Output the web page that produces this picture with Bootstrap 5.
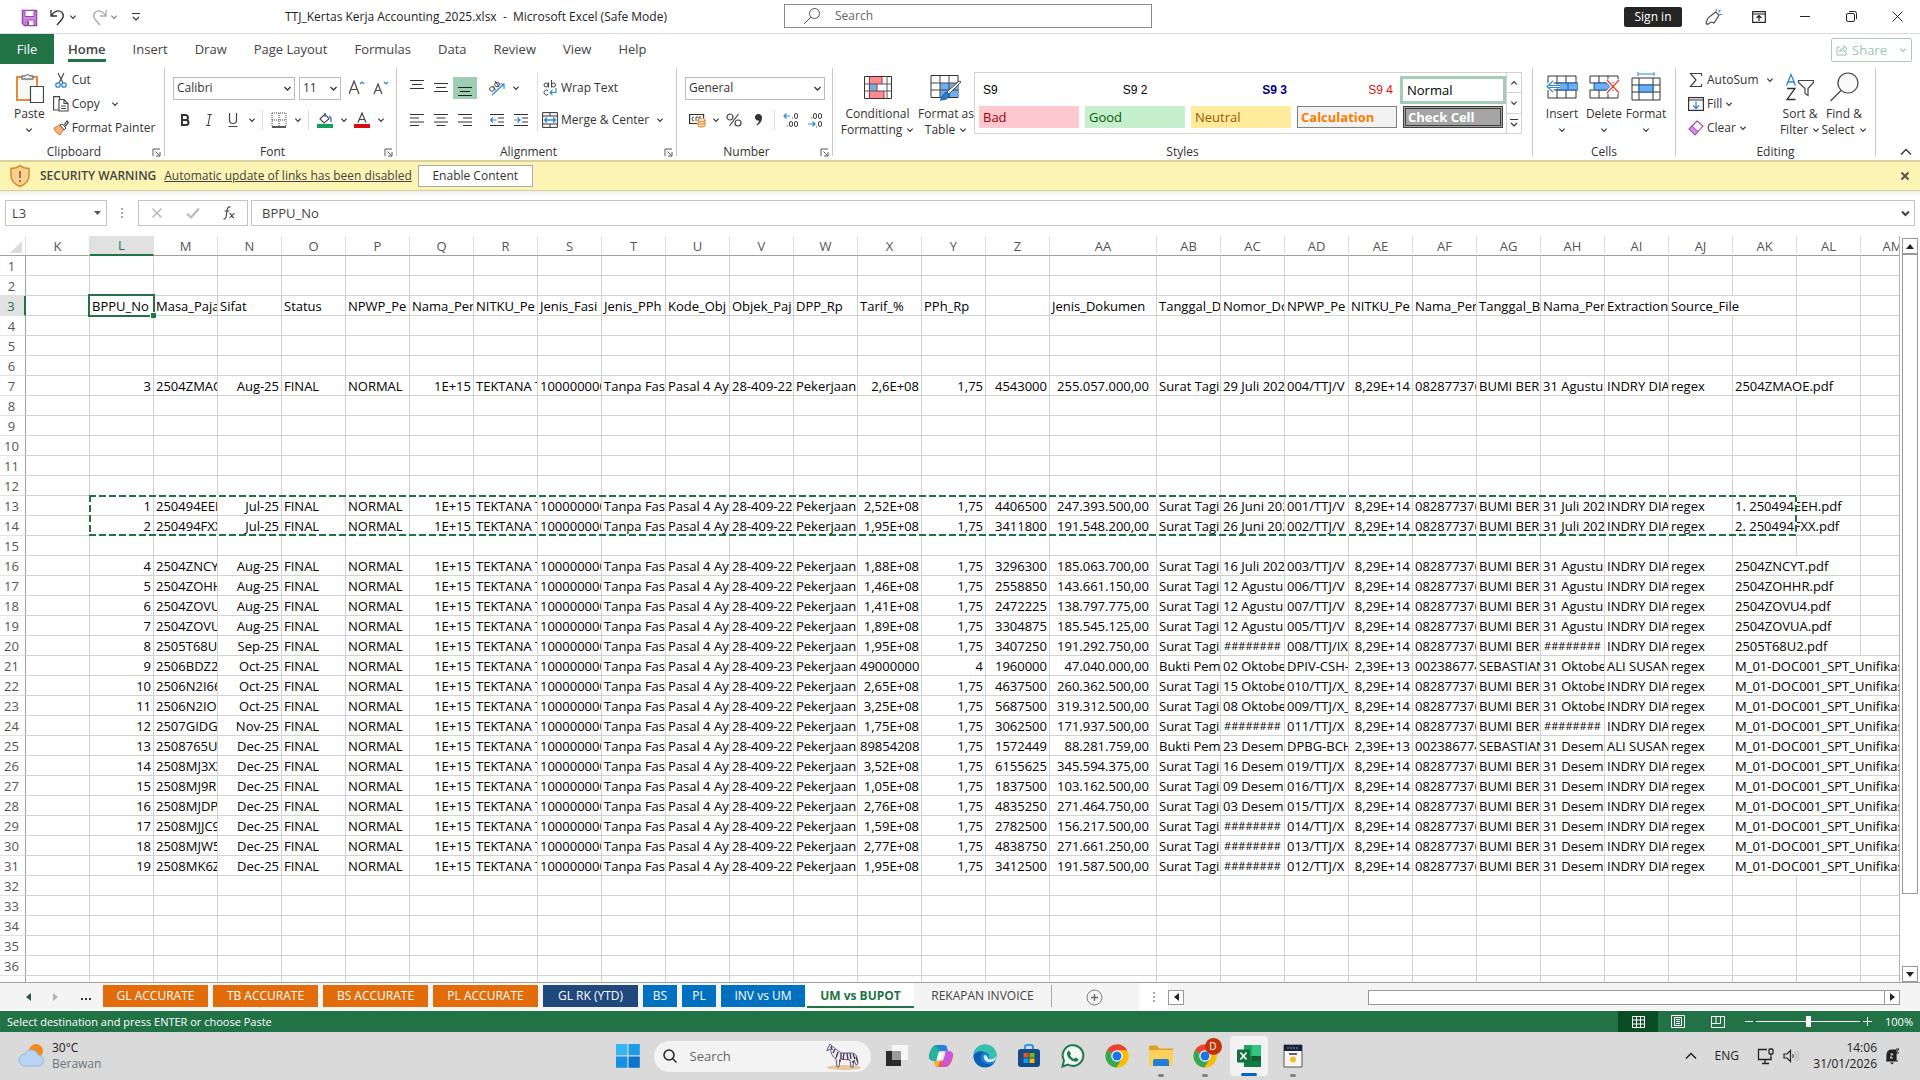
<!DOCTYPE html>
<html lang="en">
<head>
<meta charset="utf-8">
<meta name="viewport" content="width=device-width, initial-scale=1">
<title>TTJ_Kertas Kerja Accounting_2025.xlsx - Microsoft Excel</title>
<link href="https://cdn.jsdelivr.net/npm/bootstrap@5.3.0/dist/css/bootstrap.min.css" rel="stylesheet">
<style>
:root{--xl:#217346;--ink:#333;--line:#c6c6c6}
html,body{height:100%}
body{font-family:"Open Sans","Noto Sans",sans-serif;font-size:12px;line-height:16px;color:var(--ink);background:#fff;overflow:hidden}
button,input,select{font:inherit;color:inherit}
.plain{border:0;background:none;padding:0;color:inherit;display:flex;align-items:center;justify-content:center}
svg{display:block;flex:none}
.app{height:100vh;min-width:0}
.titlebar{height:34px;border-bottom:1px solid #dcdcdc}
.side{flex:1 1 0;min-width:0}
.docname{left:285px;font-size:12px;color:#222;white-space:nowrap}
.findbox{width:368px;height:24px;border:1px solid #8a8a8a;color:#666}
.findbox input,.taskfind input{border:0;outline:0;background:transparent;min-width:0}
.findbox input::placeholder,.taskfind input::placeholder{color:#666;opacity:1}
.signin{height:20px;width:58px;background:#252525;color:#fff;border-radius:2px}
.wbtn{width:46px;height:33px}
.tabs{height:30px}
.tabs a{color:#444;text-decoration:none;font-size:13px;line-height:30px;white-space:nowrap;padding:0 13px 0 14px}
.tabs a.filetab{background:var(--xl);color:#fff;width:54px;text-align:center;padding:0}
.tabs a.current span{font-weight:600;display:block;height:28px;border-bottom:3px solid var(--xl)}
.share{width:81px;height:24px;border:1px solid #a9cdb9;border-radius:2px;color:#9bc7af;font-size:13px}
.ribbon{height:96px;padding-top:4px}
.grp{height:88px;border-right:1px solid #c8c8c8;display:flex;flex-direction:column;flex:none}
.grp-main{height:72px;display:flex}
.grp-name{height:16px;line-height:24px;text-align:center;position:relative;white-space:nowrap}
.grp-name svg{position:absolute;right:3px;top:8px}
.w-clip{width:165px}.w-font{width:232px}.w-align{width:280px}.w-num{width:156px}.w-sty{width:700px}.w-cell{width:143px}.w-edit{width:200px}
.w-clip .grp-main{padding-left:14px}
.big{flex-direction:column;justify-content:flex-start;white-space:nowrap}
.big .pic{height:38px;display:flex;align-items:center;justify-content:center}
.small-b{height:24px;justify-content:flex-start;gap:3px;white-space:nowrap}
.toolrow{height:24px;display:flex;align-items:center}
.ib{width:24px;height:22px}
.ch{width:13px;height:22px}
.vs{width:1px;height:20px;background:#dcdcdc;flex:none}
.on{background:#9fcdb3}
.combo{height:23px;border:1px solid #bbb;display:flex;align-items:center;position:relative;background:#fff}
.combo select{appearance:none;border:0;background:transparent;width:100%;height:21px;padding:0 3px;outline:0}
.combo .fontsel{width:120px}.combo .sizesel{width:40px}.combo .numsel{width:138px}
.combo svg{position:absolute;right:2px;top:6px;pointer-events:none}
.cfb{width:89px}.ftb{width:48px}.cfb,.ftb{flex:none}
.cb{width:42px;flex:none}.editcol{width:94px;flex:none}.eb{width:44px;flex:none}
.gallery{width:548px;height:62px;border:1px solid #d2d2d2}
.chips{display:grid;grid-template-columns:repeat(5,100px);column-gap:6px;row-gap:5px;padding:6px 0 0 4px;grid-template-rows:22px 22px}
.chip{border:0;height:22px;padding:0 4px;text-align:left;font-size:13px;line-height:20px;background:none;color:#000}
.chip.s9{font-family:"Liberation Sans",sans-serif;font-size:12px}
.chip.navy{color:#000080}.chip.redt{color:#d11}
.chip.bad{background:#ffc7ce;color:#9c0006}.chip.good{background:#c6efce;color:#006100}.chip.neu{background:#ffeb9c;color:#9c5700}
.chip.calc{background:#f2f2f2;color:#fa7d00;border:1px solid #7f7f7f;font-weight:700;padding:0 3px}
.chip.chk{background:#a5a5a5;color:#fff;border:3px double #3f3f3f;font-weight:700;padding:0 2px;line-height:14px}
.chip.sel{outline:3px solid #a4cdb8}
.gscroll{width:15px;border-left:1px solid #d2d2d2}
.gscroll button{flex:1;width:100%}
.gscroll button+button{border-top:1px solid #d2d2d2}
.warn{height:31px;background:#fcf4b3;border-top:2px solid #d9d2a0;border-bottom:1px solid #d6d0a0;color:#444}
.warn a{color:#444}
.warn .enable{width:115px;height:22px;border:1px solid #ababab;background:#fff;color:#333;margin-left:6px}
.warnt{margin-left:8px}.warnl{margin-left:8px}.warnx{margin-right:10px}
.fx{height:45px;padding:9px 5px 0 5px;background:linear-gradient(#eee,#fff 6px);color:#444}
.fbox{height:26px;border:1px solid #c3c3c3;display:flex;align-items:center;background:#fff}
.fbox input{border:0;outline:0;background:transparent;min-width:0;width:100%;font-size:13px;padding:0}
.namebox{width:102px;padding-left:6px}.dots{margin:0 14px}.fxb{width:110px}.fxi{width:36px;height:24px}.formula{margin-left:3px;padding-left:10px}
.sheetarea{flex:1 1 0;min-height:0}
.gridwrap{flex:1 1 0;min-width:0;overflow:hidden;position:relative;border-right:1px solid #b5b5b5}
table.sheet{table-layout:fixed;border-collapse:separate;border-spacing:0;width:0;font-size:13px;line-height:18px;color:#000}
.sheet th,.sheet td{height:20px;padding:1px 2px 0 2px;overflow:hidden;white-space:nowrap;border-right:1px solid #d2d2d2;border-bottom:1px solid #d2d2d2}
.sheet th{font-weight:400;color:#555;text-align:center;padding:1px 0 0}
.sheet thead th{border-bottom-color:#a0a0a0;border-right-color:#dedede;padding:0}
.sheet tbody th{border-right-color:#a0a0a0;padding-right:2px;border-bottom-color:#e2e2e2}
.sheet th.hot{background:#e1e1e1;color:var(--xl)}
.sheet thead th.hot{border-bottom:2px solid var(--xl)}
.sheet tbody th.hot{border-right:2px solid var(--xl)}
.sheet td.r{text-align:right}
.sheet td.acc{text-align:right;padding-right:7px}
.sheet td.c{text-align:center;font-size:11px}
.cursorbox{position:absolute;left:88px;top:58px;width:67px;height:23px;border:2px solid var(--xl)}
.cursorbox i{position:absolute;right:-3px;bottom:-3px;width:6px;height:6px;background:var(--xl);border:solid #fff;border-width:1px 0 0 1px}
.ants{position:absolute;left:89px;top:259px;width:1708px;height:41px;background:
repeating-linear-gradient(90deg,var(--xl) 0 7px,#fff 7px 10px) 0 0/100% 2px no-repeat,
repeating-linear-gradient(90deg,var(--xl) 0 7px,#fff 7px 10px) 0 100%/100% 2px no-repeat,
repeating-linear-gradient(var(--xl) 0 7px,#fff 7px 10px) 0 0/2px 100% no-repeat,
repeating-linear-gradient(var(--xl) 0 7px,#fff 7px 10px) 100% 0/2px 100% no-repeat}
.vbar{width:20px;padding:2px 2px 0 2px}
.sbtn{width:16px;height:16px;border:1px solid #999;background:#fff}
.thumb{border:1px solid #999;background:#fff}
.vthumb{width:16px;flex:1;max-height:640px}
.sheettabs{height:29px;border-top:1px solid #a0a0a0;background:#f4f4f4}
.tabnav{width:103px;padding-left:26px;gap:22px}
.tabset{gap:5px;margin-right:2px}
.sheettabs .st{border:0;height:22px;color:#fff;font-size:12px;white-space:nowrap;padding:0;margin-top:2px}
.st.o{background:#e26b0a;width:105px}.st.n{background:#1f497d;width:95px}.st.b{background:#0070c0}
.st.w1{width:34px}.st.w2{width:84px}
.sheettabs .st.act{background:#fff;color:var(--xl);font-weight:700;width:107px;height:25px;padding-top:2px;border-bottom:2px solid var(--xl);margin:0}
.sheettabs .st.idle{background:none;color:#444;width:138px;border-right:1px solid #ababab}
.addsheet{width:84px}
.hbar{width:781px;align-items:center;padding-right:20px}
.split{width:29px;background:#fff;height:28px}
.hbar .sbtn{height:15px}
.hthumb{width:516px;height:15px;border-right:0}
.stat{height:21px;background:var(--xl);color:#fff;font-size:11px}
.stmsg{padding-left:7px}.zm{width:14px;height:14px}
.pct{width:46px;padding-right:7px;white-space:nowrap}
.view{width:40px;height:21px}
.view.on2{background:#0a4d22}
.zoomr{width:104px;appearance:none;background:transparent;height:14px;margin:0}
.zoomr::-webkit-slider-runnable-track{height:1px;background:#fff}
.zoomr::-webkit-slider-thumb{appearance:none;width:5px;height:11px;background:#fff;margin-top:-5px}
.taskbar{height:48px;background:#dadada;color:#222}
.apps{margin-right:18px}
.tb{width:44px;height:48px;position:relative}
.tb.run::after{content:"";position:absolute;bottom:3px;width:6px;height:3px;border-radius:2px;background:#808080}
.tb.act{width:38px;height:40px;margin:0 3px;background:#f2f2f2;border-radius:4px}
.tb.act::after{content:"";position:absolute;bottom:0;width:16px;height:3px;border-radius:2px;background:#0067c0}
.taskfind{width:217px;height:31px;border-radius:16px;background:#f3f3f3;font-size:13px}
.notif{position:absolute;left:22px;top:6px;width:17px;height:17px;border-radius:50%;background:#c4320a;color:#fff;font-size:10px;line-height:17px;text-align:center}
.weather{padding-left:18px}
.eng{margin:0 18px}.spk{margin:0 14px 0 8px}.clock{width:64px;margin-right:8px}.bell{margin-right:20px}
</style>
<script src="https://cdn.jsdelivr.net/npm/bootstrap@5.3.0/dist/js/bootstrap.bundle.min.js"></script>
</head>
<body>
<svg width="0" height="0" class="position-absolute" aria-hidden="true">
<defs>
<symbol id="chev" viewBox="0 0 9 9"><path d="M1.500 3l3 3 3-3" fill="none" stroke="currentColor" stroke-width="1.300"/></symbol>
<symbol id="chevup" viewBox="0 0 9 9"><path d="M1.500 6l3-3 3 3" fill="none" stroke="currentColor" stroke-width="1.300"/></symbol>
<symbol id="launch" viewBox="0 0 9 9"><path d="M1 8V1h7M3.500 3.500l4 4M8 4v4H4" fill="none" stroke="#555"/></symbol>
<symbol id="chrome" viewBox="0 0 24 24"><circle cx="12" cy="12" r="11.500" fill="#fbbc04"/><path d="M12 12L2 6.300A11.500 11.500 0 0 1 22 6.300z" fill="#ea4335"/><path d="M12 .5a11.500 11.500 0 0 1 10 5.800H12z" fill="#ea4335"/><path d="M2 6.300A11.500 11.500 0 0 0 11.500 23.500L17 15 12 12z" fill="#34a853"/><path d="M12 6.300h10a11.500 11.500 0 0 1-10.500 17.200L17 15z" fill="#fbbc04"/><circle cx="12" cy="12" r="5.800" fill="#fff"/><circle cx="12" cy="12" r="4.500" fill="#1a73e8"/></symbol>
</defs>
</svg>
<div class="app d-flex flex-column">

<header class="titlebar d-flex align-items-start position-relative flex-shrink-0">
  <div class="side d-flex align-items-center">
    <button class="plain ms-3 ps-1" aria-label="Save"><svg width="18" height="33" viewBox="0 0 18 33"><path d="M2.500 10.500h14v15h-12l-2-2z" fill="#cf8fdc" stroke="#9a45b0" stroke-width="1.500"/><path d="M5 10.500h9v6H5zM6 20h8v5.500H6z" fill="#fff" stroke="#9a45b0"/><path d="M8 21v4" stroke="#9a45b0" stroke-width="2"/></svg></button>
    <button class="plain ms-2 ps-1" aria-label="Undo"><svg width="16" height="33" viewBox="0 0 16 33"><path d="M1 10v6h6M1.500 15.500C4 11 9 9.500 12 12.500c3 3.500 1 6-5 12.500" fill="none" stroke="#333" stroke-width="1.300"/></svg></button>
    <button class="plain ch" aria-label="Undo list"><svg width="8" height="8"><use href="#chev"/></svg></button>
    <button class="plain ms-2 ps-1" aria-label="Redo"><svg width="16" height="33" viewBox="0 0 16 33"><path d="M15 10v6H9M14.500 15.500C12 11 7 9.500 4 12.500c-3 3.500-1 6 5 12.500" fill="none" stroke="#aaa" stroke-width="1.300"/></svg></button>
    <button class="plain ch text-black-50" aria-label="Redo list"><svg width="8" height="8"><use href="#chev"/></svg></button>
    <button class="plain ms-2 ps-1" aria-label="Customize toolbar"><svg width="8" height="10" viewBox="0 0 8 10"><path d="M0 1.500h8M1 5l3 3 3-3" fill="none" stroke="#333" stroke-width="1.200"/></svg></button>
    <div class="docname position-absolute">TTJ_Kertas Kerja Accounting_2025.xlsx&nbsp; -&nbsp; Microsoft Excel (Safe Mode)</div>
  </div>
  <label class="findbox d-flex align-items-center mt-1 ms-3"><svg class="ms-3" width="22" height="20" viewBox="0 0 22 20"><circle cx="13.500" cy="7.500" r="5" fill="none" stroke="#555"/><path d="M10 11l-7 7" stroke="#555"/></svg><input class="flex-fill ms-2 ps-1" type="text" placeholder="Search" aria-label="Search"></label>
  <div class="side d-flex align-items-center justify-content-end">
    <button class="plain signin me-2">Sign in</button>
    <button class="plain wbtn" aria-label="Whats new"><svg width="18" height="18" viewBox="0 0 18 18"><path d="M2 15l1.500 1.500L7 14l3 1 5-8-3.500-3L4 10zM8.500 5.500" fill="none" stroke="#444" stroke-width="1.100"/><path d="M12 3l1-2M14.500 4l2-2M15.500 6.500H18" stroke="#2b88d8" stroke-width="1.200"/></svg></button>
    <button class="plain wbtn" aria-label="Ribbon display options"><svg width="14" height="12" viewBox="0 0 14 12"><path d="M.7.700h12.600v10.600H.7zM.7 3h12.600M7 10V4.500M4.500 7L7 4.500 9.500 7" fill="none" stroke="#222" stroke-width="1.200"/></svg></button>
    <button class="plain wbtn" aria-label="Minimize"><svg width="10" height="10"><path d="M0 4.500h10" stroke="#222"/></svg></button>
    <button class="plain wbtn" aria-label="Restore"><svg width="11" height="11" viewBox="0 0 11 11"><rect x=".5" y="2.500" width="8" height="8" rx="1.500" fill="none" stroke="#222"/><path d="M3 .5h5.500a2 2 0 0 1 2 2V8" fill="none" stroke="#222"/></svg></button>
    <button class="plain wbtn" aria-label="Close"><svg width="11" height="11" viewBox="0 0 11 11"><path d="M.5.500l10 10M10.500.500l-10 10" stroke="#222"/></svg></button>
  </div>
</header>

<nav class="tabs d-flex flex-shrink-0">
  <a href="#" class="filetab">File</a><a href="#" class="current"><span>Home</span></a><a href="#">Insert</a><a href="#">Draw</a><a href="#">Page Layout</a><a href="#">Formulas</a><a href="#">Data</a><a href="#">Review</a><a href="#">View</a><a href="#">Help</a>
  <button class="plain share ms-auto me-2 mt-1"><svg width="12" height="12" viewBox="0 0 12 12"><path d="M4 3H1v8h9V8M3.500 8C4 5 6 4 8 4V1.500L11 5 8 8V6C6 6 5 6.500 3.500 8z" fill="none" stroke="#9bc7af"/></svg><span class="mx-1">Share</span><svg class="ms-2" width="8" height="8"><use href="#chev"/></svg></button>
</nav>

<section class="ribbon d-flex flex-shrink-0">
  <div class="grp w-clip">
    <div class="grp-main">
      <button class="plain big"><span class="pic"><svg width="30" height="32" viewBox="0 0 30 32"><path d="M3 6h20v23H3z" fill="#fff" stroke="#ed8733" stroke-width="2"/><path d="M6 8h14v19H6z" fill="#f7f7f7"/><path d="M8 8V5h3a3 3 0 0 1 5 0h3v3z" fill="#fff" stroke="#777" stroke-width="1.300"/><path d="M16.500 15.500h13v16h-13z" fill="#fff" stroke="#444" stroke-width="1.200"/></svg></span><span>Paste</span><svg class="mt-1" width="8" height="8"><use href="#chev"/></svg></button>
      <div class="ms-2">
        <button class="plain small-b"><svg width="16" height="16" viewBox="0 0 16 16"><path d="M5 1l5 10M11 1L6 11" stroke="#444" stroke-width="1.100"/><circle cx="5" cy="13" r="2.200" fill="none" stroke="#2b88d8" stroke-width="1.300"/><circle cx="11" cy="13" r="2.200" fill="none" stroke="#2b88d8" stroke-width="1.300"/></svg>Cut</button>
        <button class="plain small-b"><svg width="16" height="16" viewBox="0 0 16 16"><path d="M5.500 14H.6V.6h6V3M6 3.500h5l4 4V15H6z M11 3.500v4h4M8 10h5M8 12.500h5" fill="none" stroke="#444" stroke-width="1.100"/></svg>Copy<svg class="ms-2" width="8" height="8"><use href="#chev"/></svg></button>
        <button class="plain small-b"><svg width="16" height="16" viewBox="0 0 16 16"><path d="M1 8l6-3 4 4-4 6C5 14 2 12 1 8z" fill="#f5b278" stroke="#e07b24"/><path d="M7 5l2-1 4 4-2 2z" fill="#fff" stroke="#444"/><path d="M11 5l3-4 1.500 1.500L12 6.500" fill="none" stroke="#444" stroke-width="1.200"/></svg>Format Painter</button>
      </div>
    </div>
    <div class="grp-name pe-3">Clipboard<svg width="9" height="9"><use href="#launch"/></svg></div>
  </div>

  <div class="grp w-font">
    <div class="grp-main flex-column ps-2">
      <div class="toolrow mt-2">
        <label class="combo"><select aria-label="Font" class="fontsel"><option>Calibri</option></select><svg width="9" height="9"><use href="#chev"/></svg></label>
        <label class="combo ms-1"><select aria-label="Font size" class="sizesel"><option>11</option></select><svg width="9" height="9"><use href="#chev"/></svg></label>
        <button class="plain ib ms-1" aria-label="Increase font size"><svg width="16" height="16" viewBox="0 0 16 16"><path d="M0 14L5 1l5 13M1.700 9.500h6.600" fill="none" stroke="#444" stroke-width="1.200"/><path d="M11 4l2-2 2 2" fill="none" stroke="#2b88d8" stroke-width="1.200"/></svg></button>
        <button class="plain ib" aria-label="Decrease font size"><svg width="16" height="16" viewBox="0 0 16 16"><path d="M1 14L5 4l4 10M2.500 10.500h5" fill="none" stroke="#444" stroke-width="1.200"/><path d="M11 2l2 2 2-2" fill="none" stroke="#2b88d8" stroke-width="1.200"/></svg></button>
      </div>
      <div class="toolrow mt-2">
        <button class="plain ib" aria-label="Bold"><svg width="12" height="14" viewBox="0 0 12 14"><path d="M3 2h3.500a2.300 2.300 0 0 1 0 5H3zM3 7h4a2.500 2.500 0 0 1 0 5H3z" fill="none" stroke="#333" stroke-width="2"/></svg></button>
        <button class="plain ib" aria-label="Italic"><svg width="12" height="14" viewBox="0 0 12 14"><path d="M4.500 1.500H9M3 12.500h4.500M7 1.500l-2 11" fill="none" stroke="#444" stroke-width="1.100"/></svg></button>
        <button class="plain ib" aria-label="Underline"><svg width="12" height="16" viewBox="0 0 12 16"><path d="M2.500 1v7a3.500 3.500 0 0 0 7 0V1M1.500 14.500h9" fill="none" stroke="#444" stroke-width="1.200"/></svg></button>
        <button class="plain ch" aria-label="Underline styles"><svg width="8" height="8"><use href="#chev"/></svg></button>
        <span class="vs ms-1 me-1"></span>
        <button class="plain ib" aria-label="Borders"><svg width="16" height="16" viewBox="0 0 16 16"><path d="M1 1h14M1 8h14M1 1v13M8 1v13M15 1v13" fill="none" stroke="#444" stroke-dasharray="1 1"/><path d="M1 15h14" stroke="#222" stroke-width="1.500"/></svg></button>
        <button class="plain ch" aria-label="Border styles"><svg width="8" height="8"><use href="#chev"/></svg></button>
        <span class="vs ms-1 me-1"></span>
        <button class="plain ib" aria-label="Fill colour"><svg width="16" height="16" viewBox="0 0 16 16"><path d="M3 7l5-5 4 5-5 4z" fill="#fff" stroke="#444" stroke-width="1.100"/><path d="M8 5V1M12 4l2 2v4" fill="none" stroke="#2b6fb8" stroke-width="1.300"/><path d="M0 12h16v4H0z" fill="#12a05c"/></svg></button>
        <button class="plain ch" aria-label="Fill colours"><svg width="8" height="8"><use href="#chev"/></svg></button>
        <button class="plain ib" aria-label="Font colour"><svg width="16" height="16" viewBox="0 0 16 16"><path d="M4 10.500L8 1l4 9.500M5.500 7.500h5" fill="none" stroke="#444" stroke-width="1.200"/><path d="M0 12h16v4H0z" fill="#d90d0d"/></svg></button>
        <button class="plain ch" aria-label="Font colours"><svg width="8" height="8"><use href="#chev"/></svg></button>
      </div>
    </div>
    <div class="grp-name pe-3">Font<svg width="9" height="9"><use href="#launch"/></svg></div>
  </div>

  <div class="grp w-align">
    <div class="grp-main ps-2">
      <div>
      <div class="toolrow mt-2">
        <button class="plain ib" aria-label="Top align"><svg width="16" height="22" viewBox="0 0 16 22"><path d="M1 3.500h14M3 7.500h10M1 11.500h14" stroke="#333"/></svg></button>
        <button class="plain ib" aria-label="Middle align"><svg width="16" height="22" viewBox="0 0 16 22"><path d="M1 6.500h14M3 10.500h10M1 14.500h14" stroke="#333"/></svg></button>
        <button class="plain ib on" aria-label="Bottom align"><svg width="16" height="22" viewBox="0 0 16 22"><path d="M1 10.500h14M3 14.500h10M1 18.500h14" stroke="#222"/></svg></button>
        <button class="plain ib ms-2" aria-label="Orientation"><svg width="18" height="16" viewBox="0 0 18 16"><path d="M4 15L16 4M11 4h5v5" fill="none" stroke="#2b88d8" stroke-width="1.200"/><circle cx="4" cy="9" r="2.300" fill="none" stroke="#444"/><path d="M5 6l2.500 4M7 1l4 6" stroke="#444"/><circle cx="9" cy="4.500" r="2.300" fill="none" stroke="#444"/></svg></button>
        <button class="plain ch" aria-label="Orientation list"><svg width="8" height="8"><use href="#chev"/></svg></button>
      </div>
      <div class="toolrow mt-2">
        <button class="plain ib" aria-label="Align left"><svg width="16" height="14" viewBox="0 0 16 14"><path d="M1 1.500h14M1 5h9M1 9h14M1 12.500h9" stroke="#333"/></svg></button>
        <button class="plain ib" aria-label="Center"><svg width="16" height="14" viewBox="0 0 16 14"><path d="M1 1.500h14M3.500 5h9M1 9h14M3.500 12.500h9" stroke="#333"/></svg></button>
        <button class="plain ib" aria-label="Align right"><svg width="16" height="14" viewBox="0 0 16 14"><path d="M1 1.500h14M6 5h9M1 9h14M6 12.500h9" stroke="#333"/></svg></button>
        <button class="plain ib ms-2" aria-label="Decrease indent"><svg width="16" height="14" viewBox="0 0 16 14"><path d="M1 1.500h14M9 5h6M9 9h6M1 12.500h14" stroke="#333"/><path d="M7.500 7H1M4 4.500L1.500 7 4 9.500" fill="none" stroke="#2b88d8" stroke-width="1.200"/></svg></button>
        <button class="plain ib" aria-label="Increase indent"><svg width="16" height="14" viewBox="0 0 16 14"><path d="M1 1.500h14M9 5h6M9 9h6M1 12.500h14" stroke="#333"/><path d="M1 7h6.500M4.500 4.500L7 7 4.500 9.500" fill="none" stroke="#2b88d8" stroke-width="1.200"/></svg></button>
      </div>
      </div>
      <span class="vs h-auto mt-1 mb-2 ms-1 me-1"></span>
      <div>
        <div class="toolrow mt-2"><button class="plain small-b"><svg width="16" height="18" viewBox="0 0 16 18"><circle cx="4" cy="6" r="2" fill="none" stroke="#444"/><path d="M6.500 3.500v5M9.500 1v7.500" stroke="#444"/><circle cx="11.500" cy="6" r="2" fill="none" stroke="#444"/><path d="M6 11.500a2.500 2.500 0 1 0 0 4" fill="none" stroke="#444"/><path d="M14 9v4.500H8M10.500 11L8 13.500l2.500 2.500" fill="none" stroke="#2b88d8" stroke-width="1.200"/></svg>Wrap Text</button></div>
        <div class="toolrow mt-2"><button class="plain small-b"><svg width="16" height="16" viewBox="0 0 16 16"><path d="M.6.600h14.800v14.800H.6zM.6 4h14.800M.6 12h14.800M8 .6V4M8 12v3.500" fill="#fff" stroke="#333"/><path d="M2.500 8h11M5 5.500L2.500 8 5 10.500M11 5.500L13.500 8 11 10.500" fill="none" stroke="#2b88d8" stroke-width="1.300"/></svg>Merge &amp; Center<svg class="ms-1" width="8" height="8"><use href="#chev"/></svg></button></div>
      </div>
    </div>
    <div class="grp-name pe-3">Alignment<svg width="9" height="9"><use href="#launch"/></svg></div>
  </div>

  <div class="grp w-num">
    <div class="grp-main flex-column ps-2">
      <div class="toolrow mt-2"><label class="combo"><select aria-label="Number format" class="numsel"><option>General</option></select><svg width="9" height="9"><use href="#chev"/></svg></label></div>
      <div class="toolrow mt-2">
        <button class="plain ib" aria-label="Accounting format"><svg width="18" height="16" viewBox="0 0 18 16"><path d="M9 11.500H1.600v-9h14V6" fill="none" stroke="#333" stroke-width="1.200"/><path d="M6 5a2 2 0 1 0 0 4M8 9V5h2M13 5h-2v3" fill="none" stroke="#444"/><path d="M10 8v5.500c0 2 7 2 7 0V8" fill="#fcd9b0" stroke="#e07b24"/><ellipse cx="13.500" cy="8" rx="3.500" ry="1.400" fill="#fff" stroke="#e07b24"/><path d="M10 11c0 1.500 7 1.500 7 0" fill="none" stroke="#e07b24"/></svg></button>
        <button class="plain ch" aria-label="Currencies"><svg width="8" height="8"><use href="#chev"/></svg></button>
        <button class="plain ib" aria-label="Percent"><svg width="16" height="14" viewBox="0 0 16 14"><circle cx="4" cy="4" r="3" fill="none" stroke="#444" stroke-width="1.200"/><circle cx="12" cy="10" r="3" fill="none" stroke="#444" stroke-width="1.200"/><path d="M12.500 1l-9 12" stroke="#444" stroke-width="1.200"/></svg></button>
        <button class="plain ib" aria-label="Comma style"><svg width="9" height="14" viewBox="0 0 9 14"><path d="M4.500 1a3.500 3.500 0 0 1 3.500 4c0 3-2 6-5 7.500l-.5-1C4 10.500 5 9 5 7.500a3.300 3.300 0 1 1-.5-6.500z" fill="#333"/></svg></button>
        <span class="vs ms-1 me-1"></span>
        <button class="plain ib" aria-label="Increase decimal"><svg width="16" height="16" viewBox="0 0 16 16"><path d="M7 4H1M3.500 1.500L1 4l2.500 2.500" fill="none" stroke="#2b88d8" stroke-width="1.200"/><g fill="none" stroke="#444"><rect x="11.500" y="1.500" width="3" height="5" rx="1.500"/><rect x="6.500" y="9.500" width="3" height="5" rx="1.500"/><rect x="11.500" y="9.500" width="3" height="5" rx="1.500"/></g><path d="M4 14h1M9 6h1" stroke="#444"/></svg></button>
        <button class="plain ib" aria-label="Decrease decimal"><svg width="16" height="16" viewBox="0 0 16 16"><path d="M1 12h7M5.500 9.500L8 12l-2.500 2.500" fill="none" stroke="#2b88d8" stroke-width="1.200"/><g fill="none" stroke="#444"><rect x="6.500" y="1.500" width="3" height="5" rx="1.500"/><rect x="11.500" y="1.500" width="3" height="5" rx="1.500"/><rect x="11.500" y="9.500" width="3" height="5" rx="1.500"/></g><path d="M4 6h1M9 15h1" stroke="#444"/></svg></button>
      </div>
    </div>
    <div class="grp-name pe-3">Number<svg width="9" height="9"><use href="#launch"/></svg></div>
  </div>

  <div class="grp w-sty">
    <div class="grp-main">
      <button class="plain big cfb"><span class="pic"><svg width="28" height="23" viewBox="0 0 28 23"><path d="M.5.500h27v22H.5z" fill="#fff" stroke="#333"/><path d="M6 1h12v7H6zM6 15h14v7H6z" fill="#ff8a8f"/><path d="M6 8h7v7H6z" fill="#6cb0f2"/><path d="M.5 8h27M.5 15h27M23 .5v22" stroke="#555"/><path d="M5.500.500v22M18 .5V8M13 8v7M20 15v7" stroke="#c0282d"/></svg></span><span>Conditional</span><span class="d-flex align-items-center gap-1">Formatting<svg width="8" height="8"><use href="#chev"/></svg></span></button>
      <button class="plain big ftb"><span class="pic"><svg width="32" height="28" viewBox="0 0 32 28"><path d="M1 2.500h27v22H1z" fill="#fff" stroke="#333"/><path d="M10 10h18v14H10z" fill="#6cb0f2"/><path d="M1 10h27M1 17h27M10 2.500v22M19 2.500v22" stroke="#444"/><path d="M31 9L19 21l-2-2L29 8z" fill="#fff" stroke="#444"/><path d="M19 21c1 5-5 6-9 6 3-2 2-7 7-8z" fill="#2b7cd3" stroke="#1c5a9c"/></svg></span><span>Format as</span><span class="d-flex align-items-center gap-1">Table<svg width="8" height="8"><use href="#chev"/></svg></span></button>
      <div class="gallery d-flex mt-1 ms-1">
        <div class="chips flex-fill">
          <button class="chip s9">S9</button><button class="chip s9 text-center">S9 2</button><button class="chip s9 text-end fw-bold navy">S9 3</button><button class="chip s9 text-end redt">S9 4</button><button class="chip sel">Normal</button>
          <button class="chip bad">Bad</button><button class="chip good">Good</button><button class="chip neu">Neutral</button><button class="chip calc">Calculation</button><button class="chip chk">Check Cell</button>
        </div>
        <div class="gscroll d-flex flex-column">
          <button class="plain" aria-label="Row up"><svg width="8" height="8"><use href="#chevup"/></svg></button>
          <button class="plain" aria-label="Row down"><svg width="8" height="8"><use href="#chev"/></svg></button>
          <button class="plain" aria-label="More styles"><svg width="8" height="10" viewBox="0 0 8 10"><path d="M0 1.500h8M1 5l3 3 3-3" fill="none" stroke="#333" stroke-width="1.200"/></svg></button>
        </div>
      </div>
    </div>
    <div class="grp-name">Styles</div>
  </div>

  <div class="grp w-cell">
    <div class="grp-main ps-2">
      <button class="plain big cb"><span class="pic"><svg width="32" height="24" viewBox="0 0 32 24"><path d="M2 1h28v22H2zM2 8h28M2 15h28M11 1v22M20 1v22" fill="#fff" stroke="#333"/><path d="M12 8h20v7H12z" fill="#6cb0f2" stroke="#1f5fa8"/><path d="M22 8v7" stroke="#1f5fa8"/><path d="M14 11.500H1M7 6l-6 5.500L7 17" fill="none" stroke="#fff" stroke-width="4"/><path d="M14 10.500H3M14 12.500H3M7 6l-6 5.500L7 17" fill="none" stroke="#2b88d8" stroke-width="1.200"/></svg></span><span>Insert</span><svg class="mt-1" width="8" height="8"><use href="#chev"/></svg></button>
      <button class="plain big cb"><span class="pic"><svg width="32" height="24" viewBox="0 0 32 24"><path d="M2 1h28v7H2zM2 15h28v8H2zM11 1v7M20 1v7M11 15v8M20 15v8" fill="#fff" stroke="#333"/><path d="M6 8h13l3 3.500-3 3.500H6z" fill="#6cb0f2" stroke="#1f5fa8"/><path d="M19 5l12 13M31 5L19 18" stroke="#fff" stroke-width="4"/><path d="M19 5l12 13M31 5L19 18" stroke="#e8403a" stroke-width="1.300"/></svg></span><span>Delete</span><svg class="mt-1" width="8" height="8"><use href="#chev"/></svg></button>
      <button class="plain big cb"><span class="pic"><svg width="30" height="34" viewBox="0 0 30 34"><path d="M1 8h28v22H1zM1 15h28M1 22h28M8 8v22M22 8v22" fill="#fff" stroke="#333"/><path d="M8 15h14v7H8z" fill="#6cb0f2" stroke="#1f5fa8"/><path d="M7 4h16M7 2v4M23 2v4" stroke="#2b88d8"/></svg></span><span>Format</span><svg class="mt-1" width="8" height="8"><use href="#chev"/></svg></button>
    </div>
    <div class="grp-name">Cells</div>
  </div>

  <div class="grp w-edit">
    <div class="grp-main ps-2">
      <div class="editcol ps-1">
        <button class="plain small-b"><svg width="16" height="16" viewBox="0 0 16 16"><path d="M13.500 4V1.500H2.500L8 8l-5.500 6.500h11V12" fill="none" stroke="#444" stroke-width="1.200"/></svg>AutoSum<svg class="ms-1" width="8" height="8"><use href="#chev"/></svg></button>
        <button class="plain small-b"><svg width="16" height="14" viewBox="0 0 16 14"><path d="M.6.600h14.800v12.800H.6zM.6 3h14.800" fill="#fff" stroke="#333" stroke-width="1.200"/><path d="M8 4.500V11M5 8.500L8 11.500l3-3" fill="none" stroke="#2b88d8" stroke-width="1.300"/></svg>Fill<svg width="8" height="8"><use href="#chev"/></svg></button>
        <button class="plain small-b"><svg width="16" height="16" viewBox="0 0 16 16"><path d="M1 9l8-8 6 5-8 9z" fill="#fff" stroke="#9a45b0" stroke-width="1.100"/><path d="M1 9l3-3 6 5.500L7 15z" fill="#cf8fdc" stroke="#9a45b0"/></svg>Clear<svg width="8" height="8"><use href="#chev"/></svg></button>
      </div>
      <button class="plain big eb"><span class="pic"><svg width="30" height="28" viewBox="0 0 30 28"><path d="M1.500 12.500L6 1.500l4.500 11M3 9h6" fill="none" stroke="#2b88d8" stroke-width="1.300"/><path d="M2 15.500h8L2 26.500h8.500" fill="none" stroke="#333" stroke-width="1.300"/><path d="M13.500 7.500h15v2L23 15.500v7l-3-2v-5l-6.500-6z" fill="#fff" stroke="#444" stroke-width="1.200"/></svg></span><span>Sort &amp;</span><span class="d-flex align-items-center gap-1">Filter<svg width="8" height="8"><use href="#chev"/></svg></span></button>
      <button class="plain big eb"><span class="pic"><svg width="30" height="30" viewBox="0 0 30 30"><circle cx="19" cy="11" r="10" fill="#fafafa" stroke="#444" stroke-width="1.200"/><path d="M12 18.500L1.500 29" stroke="#444" stroke-width="1.300"/></svg></span><span>Find &amp;</span><span class="d-flex align-items-center gap-1">Select<svg width="8" height="8"><use href="#chev"/></svg></span></button>
    </div>
    <div class="grp-name">Editing</div>
  </div>
  <button class="plain ms-auto mt-auto me-2 mb-1" aria-label="Collapse ribbon"><svg width="12" height="8" viewBox="0 0 12 8"><path d="M1 6.500l5-5 5 5" fill="none" stroke="#333" stroke-width="1.300"/></svg></button>
</section>

<div class="warn d-flex align-items-center flex-shrink-0">
  <svg class="ms-2" width="24" height="24" viewBox="0 0 24 24"><path d="M12 1.500c3 2.500 6 3 9 3v7c0 5-4 9-9 11-5-2-9-6-9-11v-7c3 0 6-.5 9-3z" fill="#fbd18f" stroke="#d98a2b" stroke-width="1.500"/><path d="M12 7v7M12 16v2" stroke="#7a5a2c" stroke-width="1.500"/></svg>
  <strong class="fw-semibold warnt">SECURITY WARNING</strong>
  <a href="#" class="warnl">Automatic update of links has been disabled</a>
  <button class="enable p-0">Enable Content</button>
  <button class="plain ms-auto warnx" aria-label="Close message"><svg width="10" height="10" viewBox="0 0 10 10"><path d="M1.500 1.500l7 7M8.500 1.500l-7 7" stroke="#555" stroke-width="2"/></svg></button>
</div>

<div class="fx d-flex flex-shrink-0">
  <div class="fbox namebox"><input type="text" value="L3" aria-label="Name box"><svg class="me-1" width="9" height="6"><path d="M1 1h7L4.500 5z" fill="#555"/></svg></div>
  <svg class="dots" width="3" height="26" viewBox="0 0 3 26"><path d="M0 8h2v2H0zM0 12h2v2H0zM0 16h2v2H0z" fill="#aaa"/></svg>
  <div class="fbox fxb">
    <button class="plain fxi" aria-label="Cancel"><svg width="12" height="12" viewBox="0 0 12 12"><path d="M1.500 1.500l9 9M10.500 1.500l-9 9" stroke="#b9b9b9" stroke-width="1.500"/></svg></button>
    <button class="plain fxi" aria-label="Enter"><svg width="14" height="12" viewBox="0 0 14 12"><path d="M1 6.500l4 4 8-9" fill="none" stroke="#b9b9b9" stroke-width="2"/></svg></button>
    <button class="plain fxi" aria-label="Insert function"><svg width="14" height="14" viewBox="0 0 14 14"><path d="M8.500 1C6 .5 5.500 2 5 5L4 11c-.3 1.600-1 2.200-2.500 2M2.500 5h5M7.500 7.500c2-.5 2 4.500 4.500 4M12.500 7.500c-2 0-3 4-5 4" fill="none" stroke="#444" stroke-width="1.200"/></svg></button>
  </div>
  <div class="fbox flex-fill formula"><input type="text" value="BPPU_No" aria-label="Formula bar"><svg class="me-1" width="9" height="9" viewBox="0 0 9 9"><path d="M1 2.500l3.500 3.500L8 2.500" fill="none" stroke="#444" stroke-width="2"/></svg></div>
</div>

<main class="sheetarea d-flex">
  <div class="gridwrap">
    <table class="sheet" id="sheet"><colgroup></colgroup><thead></thead><tbody></tbody></table>
    <div class="ants"></div>
    <div class="cursorbox"><i></i></div>
  </div>
  <div class="vbar d-flex flex-column align-items-center">
    <button class="plain sbtn flex-shrink-0" aria-label="Scroll up"><svg width="8" height="5"><path d="M0 5l4-5 4 5z" fill="#222"/></svg></button>
    <div class="thumb vthumb"></div>
    <button class="plain sbtn mt-auto flex-shrink-0" aria-label="Scroll down"><svg width="8" height="5"><path d="M0 0l4 5 4-5z" fill="#222"/></svg></button>
  </div>
</main>

<div class="sheettabs d-flex flex-shrink-0">
  <div class="tabnav d-flex align-items-center">
    <button class="plain" aria-label="Previous sheets"><svg width="5" height="8"><path d="M5 0v8L0 4z" fill="#1e5c3a"/></svg></button>
    <button class="plain" aria-label="Next sheets"><svg width="5" height="8"><path d="M0 0v8l5-4z" fill="#b5b5b5"/></svg></button>
    <button class="plain" aria-label="More sheets"><svg width="12" height="8"><path d="M1 5h2v2H1zM5 5h2v2H5zM9 5h2v2H9z" fill="#333"/></svg></button>
  </div>
  <div class="d-flex tabset">
    <button class="st o">GL ACCURATE</button><button class="st o">TB ACCURATE</button><button class="st o">BS ACCURATE</button><button class="st o">PL ACCURATE</button><button class="st n">GL RK (YTD)</button><button class="st b w1">BS</button><button class="st b w1">PL</button><button class="st b w2">INV vs UM</button>
  </div>
  <button class="st act">UM vs BUPOT</button><button class="st idle">REKAPAN INVOICE</button>
  <button class="plain addsheet" aria-label="New sheet"><svg width="17" height="17" viewBox="0 0 17 17"><circle cx="8.500" cy="8.500" r="7.500" fill="none" stroke="#777"/><path d="M8.500 5v7M5 8.500h7" stroke="#666" stroke-width="1.300"/></svg></button>
  <div class="hbar ms-auto d-flex">
    <div class="split d-flex align-items-center justify-content-center"><svg width="2" height="12"><path d="M0 1h2v2H0zM0 5h2v2H0zM0 9h2v2H0z" fill="#aaa"/></svg></div>
    <button class="plain sbtn" aria-label="Scroll left"><svg width="5" height="8"><path d="M5 0v8L0 4z" fill="#222"/></svg></button>
    <div class="thumb ms-auto hthumb"></div>
    <button class="plain sbtn" aria-label="Scroll right"><svg width="5" height="8"><path d="M0 0v8l5-4z" fill="#222"/></svg></button>
  </div>
</div>

<footer class="stat d-flex align-items-center flex-shrink-0">
  <span class="stmsg">Select destination and press ENTER or choose Paste</span>
  <button class="plain view on2 ms-auto" aria-label="Normal view"><svg width="13" height="12" viewBox="0 0 13 12"><path d="M.5.500h12v11H.5zM4.500.500v11M8.500.500v11M.5 4h12M.5 8h12" fill="none" stroke="#fff"/></svg></button>
  <button class="plain view" aria-label="Page layout view"><svg width="14" height="13" viewBox="0 0 14 13"><path d="M.5.500h13v12H.5zM3.500 2.500h7v8h-7zM5 4.500h4M5 6.500h4M5 8.500h4" fill="none" stroke="#fff"/></svg></button>
  <button class="plain view" aria-label="Page break view"><svg width="14" height="12" viewBox="0 0 14 12"><path d="M.5.500h13v11H.5zM.5 7.500h9V.5M5 .5v7" fill="none" stroke="#fff"/></svg></button>
  <button class="plain zm ms-1" aria-label="Zoom out"><svg width="8" height="9"><path d="M0 4.500h8" stroke="#fff"/></svg></button>
  <input class="zoomr" type="range" min="0" max="100" value="50" aria-label="Zoom">
  <button class="plain zm" aria-label="Zoom in"><svg width="9" height="9"><path d="M0 4.500h9M4.500 0v9" stroke="#fff"/></svg></button>
  <span class="pct text-end">100%</span>
</footer>

<div class="taskbar d-flex flex-shrink-0 align-items-center">
  <div class="side d-flex align-items-center gap-1 weather">
    <svg width="26" height="26" viewBox="0 0 26 26"><circle cx="18" cy="8" r="7" fill="#f28c1e"/><path d="M7 23a6 6 0 0 1 0-12 7 7 0 0 1 13 1 5.500 5.500 0 0 1 0 11z" fill="#b9d4f5" stroke="#8fb6ea"/></svg>
    <div class="ps-1"><div>30°C</div><div class="text-secondary">Berawan</div></div>
  </div>
  <div class="apps d-flex align-items-center">
    <button class="plain tb" aria-label="Start"><svg width="24" height="24" viewBox="0 0 24 24"><path d="M0 0h11.300v11.300H0z" fill="#35b5f2"/><path d="M12.500 0h11.300v11.300H12.500z" fill="#1e9be8"/><path d="M0 12.500h11.300v11.300H0z" fill="#1590e2"/><path d="M12.500 12.500h11.300v11.300H12.500z" fill="#0a74cc"/></svg></button>
    <label class="taskfind d-flex align-items-center ms-1"><svg class="ms-2" width="16" height="16" viewBox="0 0 16 16"><circle cx="7" cy="7" r="5" fill="none" stroke="#222" stroke-width="1.500"/><path d="M10.500 10.500l4 4" stroke="#222" stroke-width="1.500"/></svg><input class="flex-fill ms-2 ps-1" type="text" placeholder="Search" aria-label="Search the web and Windows">
      <svg class="me-2" width="40" height="28" viewBox="0 0 40 28"><ellipse cx="21" cy="25.500" rx="17" ry="2.500" fill="#e8c89a"/><path d="M4 8l3-6 3 3c4 2 6 6 10 6h8c5 0 6 3 6 7l1 4-2 1-2-5-1 7h-2l-1-7-10-1-1 8h-2l-1-8c-4-2-5-7-6-10l-3 2z" fill="#ece8ee" stroke="#6a5b78"/><path d="M12 7l-2 4M15 10l-2 6M18 11v6M21 11l-1 7M24 11l1 7M27 11l1 6M30 12l2 5M8 4l1 4M16 19h2M29 20h2M33 15l2 5" stroke="#43354f" stroke-width="1.300"/></svg></label>
    <button class="plain tb ms-1" aria-label="Task view"><svg width="24" height="24" viewBox="0 0 24 24"><path d="M1 7h15v15H1z" fill="#2b2b2b"/><path d="M7 1h16v15H7z" fill="#fafafa" opacity=".85"/><path d="M7 7h9v9H7z" fill="#9a9a9a"/></svg></button>
    <button class="plain tb" aria-label="Copilot"><svg width="26" height="24" viewBox="0 0 26 24"><path d="M8 1h8c3 0 3 3 4 6H12c-2 0-3 6-4 10-2 0-6 0-7-3C0 11 4 1 8 1z" fill="#2a7de1"/><path d="M8 1C5 1 2 8 1 12c0 4 4 5 7 5l3-11z" fill="#27b39a"/><path d="M18 23h-8c-3 0-3-3-4-6h8c2 0 3-6 4-10 2 0 6 0 7 3 1 3-3 13-7 13z" fill="#f0585f"/><path d="M18 7c3 0 7 0 7 4l-4 9c-3 3-5 3-7 3z" fill="#c557e0"/><path d="M6 17h6l-2 6c-3 0-3-3-4-6z" fill="#f7b52c"/><path d="M11 8h5l-2 8H9z" fill="#f4f4f4"/></svg></button>
    <button class="plain tb" aria-label="Edge"><svg width="24" height="24" viewBox="0 0 24 24"><circle cx="12" cy="12" r="11.500" fill="#1683d8"/><path d="M1 10C2 4 7 .5 12 .5 19 .5 24 6 23.500 11c-.5 4-5 5-8 4 2-3 0-7-4-7-5 0-9 1-10.500 2z" fill="#35c2a8"/><path d="M.5 12C2 7 9 6 12 8.500c-3 0-5 3-4 6 1 5 7 7 12 5-4 6-19 5-19.500-7.500z" fill="#0d5fb5"/><path d="M11 11c3 0 4 2 4 4 3 1 8 0 8.500-4 0 4-2 7-6 7-4 1-8-3-6.500-7z" fill="#dfeaf5"/></svg></button>
    <button class="plain tb" aria-label="Store"><svg width="24" height="24" viewBox="0 0 24 24"><path d="M8 6V3a2 2 0 0 1 2-2h4a2 2 0 0 1 2 2v3" fill="none" stroke="#2a9be0" stroke-width="2"/><rect x="1" y="5" width="22" height="18" rx="3" fill="#134a8c"/><path d="M6.500 9h5v4.500h-5z" fill="#f25022"/><path d="M12.500 9h5v4.500h-5z" fill="#7fba00"/><path d="M6.500 14.500h5V19h-5z" fill="#00a4ef"/><path d="M12.500 14.500h5V19h-5z" fill="#ffb900"/></svg></button>
    <button class="plain tb" aria-label="WhatsApp"><svg width="24" height="24" viewBox="0 0 24 24"><path d="M1.500 22.500l1.500-6a10.300 10.300 0 1 1 4 4z" fill="#f4f7f5" stroke="#1f7a4d" stroke-width="2"/><path d="M8 6.500l2 3-1 1.500c1 2 2 3 4 4l1.500-1.500 3 1.500c0 2-2 3-4 2.500-4-1-7-4-7.500-7.500 0-1.500.5-3 2-3.500z" fill="#1f7a4d"/></svg></button>
    <button class="plain tb" aria-label="Chrome"><svg width="24" height="24"><use href="#chrome"/></svg></button>
    <button class="plain tb run" aria-label="File Explorer"><svg width="24" height="24" viewBox="0 0 24 24"><path d="M0 3a1.500 1.500 0 0 1 1.500-1.500H8l2 3H24V20H0z" fill="#e0a020"/><path d="M0 6h24v14a2 2 0 0 1-2 2H2a2 2 0 0 1-2-2z" fill="#fcd05a"/><path d="M4 22v-5a2 2 0 0 1 2-2h12a2 2 0 0 1 2 2v5z" fill="#1f7fd6"/></svg></button>
    <button class="plain tb run" aria-label="Chrome profile"><svg width="24" height="24"><use href="#chrome"/></svg><span class="notif">D</span></button>
    <button class="plain tb act" aria-label="Excel"><svg width="24" height="24" viewBox="0 0 24 24"><path d="M7 1h16a1 1 0 0 1 1 1v20a1 1 0 0 1-1 1H7z" fill="#21a366"/><path d="M7 12h17v10a1 1 0 0 1-1 1H7z" fill="#107c41"/><path d="M15 1h9v11h-9z" fill="#33c481"/><path d="M15 12h9v5h-9z" fill="#185c37"/><rect y="5.500" width="13" height="13" rx="1" fill="#0f7038"/><path d="M3.500 8.500l6 7M9.500 8.500l-6 7" stroke="#fff" stroke-width="1.800"/></svg></button>
    <button class="plain tb run" aria-label="Certificate viewer"><svg width="20" height="24" viewBox="0 0 20 24"><path d="M1 1h18v22H1z" fill="#f7f7f7" stroke="#555"/><path d="M1 1h18v6H1z" fill="#12233f"/><path d="M4 4h12" stroke="#8fa0bb" stroke-dasharray="2 1"/><path d="M6 10h8" stroke="#333" stroke-width="1.500"/><circle cx="10" cy="15.500" r="3" fill="#f1bb2c"/></svg></button>
  </div>
  <div class="side d-flex align-items-center justify-content-end">
    <button class="plain" aria-label="Hidden icons"><svg width="12" height="8" viewBox="0 0 12 8"><path d="M1 6.500l5-5 5 5" fill="none" stroke="#222" stroke-width="1.500"/></svg></button>
    <span class="eng">ENG</span>
    <svg width="18" height="17" viewBox="0 0 18 17"><path d="M10 1.500H1.500v10H14V9M5 15.500h7M8 12v3" fill="none" stroke="#222" stroke-width="1.300"/><rect x="12" y="1" width="4" height="5" rx="1" fill="none" stroke="#222" stroke-width="1.300"/><path d="M14 6v4" stroke="#222"/></svg>
    <svg class="spk" width="16" height="14" viewBox="0 0 16 14"><path d="M1 5h3l3.500-3.500v11L4 9H1z" fill="none" stroke="#222" stroke-width="1.200"/><path d="M9.500 5c1 1 1 3 0 4" fill="none" stroke="#222"/><path d="M11.500 3c2 2 2 6 0 8M13.500 1.500c3 3 3 8 0 11" fill="none" stroke="#aaa"/></svg>
    <div class="clock text-end"><div>14:06</div><div>31/01/2026</div></div>
    <svg class="bell" width="15" height="17" viewBox="0 0 15 17"><path d="M2 13V7c0-3 2-5 5-5h4v11zM1 13h12" fill="#222" stroke="#222" stroke-width="1.200"/><path d="M5 14.500h4L7 16.500z" fill="#222"/><path d="M5 6h3l-3 4h3" fill="none" stroke="#ddd"/><path d="M11 1h3l-3 4h3" fill="none" stroke="#222"/></svg>
  </div>
</div>
</div>

<script>
const cols=["K","L","M","N","O","P","Q","R","S","T","U","V","W","X","Y","Z","AA","AB","AC","AD","AE","AF","AG","AH","AI","AJ","AK","AL","AM"];
const heads=["BPPU_No","Masa_Paja","Sifat","Status","NPWP_Pe","Nama_Per","NITKU_Pe","Jenis_Fasi","Jenis_PPh","Kode_Obj","Objek_Paj","DPP_Rp","Tarif_%","PPh_Rp","","Jenis_Dokumen","Tanggal_D","Nomor_Do","NPWP_Pe","NITKU_Pe","Nama_Per","Tanggal_B","Nama_Per","Extraction","Source_File"];
const H="########",S="Surat Tagi",B="Bukti Pem",U="M_01-DOC001_SPT_Unifikasi";
const A=["8,29E+14","082877376","BUMI BERK"],C=["2,39E+13","002386774","SEBASTIAN"];
// row, no, bppu, month, dpp, rate, pph, document value, document type, date, number, issuer, issued, signer, file
const rows=[
[7,3,"2504ZMAOE","Aug-25","2,6E+08","1,75","4543000","255.057.000,00",S,"29 Juli 202","004/TTJ/V",A,"31 Agustu","INDRY DIA","2504ZMAOE.pdf"],
[13,1,"250494EEH","Jul-25","2,52E+08","1,75","4406500","247.393.500,00",S,"26 Juni 202","001/TTJ/V",A,"31 Juli 202","INDRY DIA","1. 250494EEH.pdf"],
[14,2,"250494FXX","Jul-25","1,95E+08","1,75","3411800","191.548.200,00",S,"26 Juni 202","002/TTJ/V",A,"31 Juli 202","INDRY DIA","2. 250494FXX.pdf"],
[16,4,"2504ZNCYT","Aug-25","1,88E+08","1,75","3296300","185.063.700,00",S,"16 Juli 202","003/TTJ/V",A,"31 Agustu","INDRY DIA","2504ZNCYT.pdf"],
[17,5,"2504ZOHHR","Aug-25","1,46E+08","1,75","2558850","143.661.150,00",S,"12 Agustu","006/TTJ/V",A,"31 Agustu","INDRY DIA","2504ZOHHR.pdf"],
[18,6,"2504ZOVU4","Aug-25","1,41E+08","1,75","2472225","138.797.775,00",S,"12 Agustu","007/TTJ/V",A,"31 Agustu","INDRY DIA","2504ZOVU4.pdf"],
[19,7,"2504ZOVUA","Aug-25","1,89E+08","1,75","3304875","185.545.125,00",S,"12 Agustu","005/TTJ/V",A,"31 Agustu","INDRY DIA","2504ZOVUA.pdf"],
[20,8,"2505T68U2","Sep-25","1,95E+08","1,75","3407250","191.292.750,00",S,H,"008/TTJ/IX",A,H,"INDRY DIA","2505T68U2.pdf"],
[21,9,"2506BDZ25","Oct-25","49000000","4","1960000","47.040.000,00",B,"02 Oktobe","DPIV-CSH-",C,"31 Oktobe","ALI SUSAN",U],
[22,10,"2506N2I66","Oct-25","2,65E+08","1,75","4637500","260.362.500,00",S,"15 Oktobe","010/TTJ/X_",A,"31 Oktobe","INDRY DIA",U],
[23,11,"2506N2IO6","Oct-25","3,25E+08","1,75","5687500","319.312.500,00",S,"08 Oktobe","009/TTJ/X_",A,"31 Oktobe","INDRY DIA",U],
[24,12,"2507GIDG9","Nov-25","1,75E+08","1,75","3062500","171.937.500,00",S,H,"011/TTJ/X",A,H,"INDRY DIA",U],
[25,13,"2508765UE","Dec-25","89854208","1,75","1572449","88.281.759,00",B,"23 Desem","DPBG-BCH",C,"31 Desem","ALI SUSAN",U],
[26,14,"2508MJ3XX","Dec-25","3,52E+08","1,75","6155625","345.594.375,00",S,"16 Desem","019/TTJ/X",A,"31 Desem","INDRY DIA",U],
[27,15,"2508MJ9R","Dec-25","1,05E+08","1,75","1837500","103.162.500,00",S,"09 Desem","016/TTJ/X",A,"31 Desem","INDRY DIA",U],
[28,16,"2508MJDP","Dec-25","2,76E+08","1,75","4835250","271.464.750,00",S,"03 Desem","015/TTJ/X",A,"31 Desem","INDRY DIA",U],
[29,17,"2508MJJC9","Dec-25","1,59E+08","1,75","2782500","156.217.500,00",S,H,"014/TTJ/X",A,"31 Desem","INDRY DIA",U],
[30,18,"2508MJW5","Dec-25","2,77E+08","1,75","4838750","271.661.250,00",S,H,"013/TTJ/X",A,"31 Desem","INDRY DIA",U],
[31,19,"2508MK6Z","Dec-25","1,95E+08","1,75","3412500","191.587.500,00",S,H,"012/TTJ/X",A,"31 Desem","INDRY DIA",U]];
const td=(t,c="",n=1)=>`<td${c?` class="${c}"`:""}${n>1?` colspan="${n}"`:""}>${t}</td>`;
const hash=v=>td(v,v===H?"c":"");
const byRow={};
for(const [r,no,m,n,x,y,z,aa,ab,ac,ad,org,ah,ai,f] of rows)
  byRow[r]=td("")+td(no,"r")+td(m)+td(n,"r")+td("FINAL")+td("NORMAL")+td("1E+15","r")+td("TEKTANA T")+td("1000000000")+td("Tanpa Fas")+td("Pasal 4 Ay")+td(r===21?"28-409-23":"28-409-22")+td("Pekerjaan")+td(x,"r")+td(y,"r")+td(z,"r")+td(aa,"acc")+td(ab)+hash(ac)+td(ad)+td(org[0],"r")+td(org[1])+td(org[2])+hash(ah)+td(ai)+td("regex")+(f===U?td(f,"",3):td(f,"",2)+td(""));
byRow[3]=td("")+heads.map((h,i)=>td(h,"",i===24?2:1)).join("")+td("")+td("");
const t=document.getElementById("sheet");
t.querySelector("colgroup").innerHTML=`<col style="width:26px">`+cols.map(c=>`<col style="width:${c==="AA"?107:64}px">`).join("");
t.tHead.innerHTML=`<tr><th><svg class="ms-2" width="16" height="18"><path d="M14 4v12H2z" fill="#dcdcdc"/></svg></th>`+cols.map(c=>`<th${c==="L"?' class="hot"':""}>${c}</th>`).join("")+"</tr>";
let out="";
for(let r=1;r<38;r++)out+=`<tr><th${r===3?' class="hot"':""}>${r}</th>${byRow[r]||td("").repeat(cols.length)}</tr>`;
t.tBodies[0].innerHTML=out;
</script>
</body>
</html>
